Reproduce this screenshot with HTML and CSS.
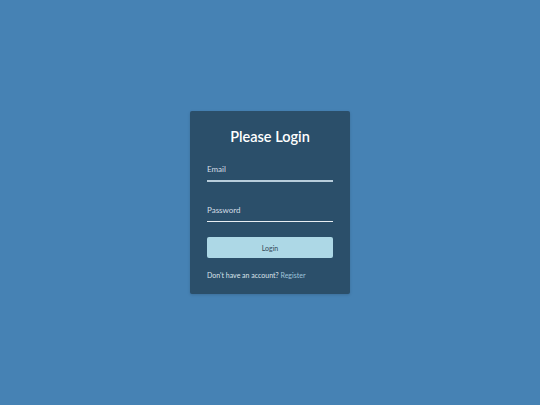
FILE: index.html
```html
<!DOCTYPE html>
<html>
<head>
<meta charset="utf-8">
<link rel="stylesheet" href="styles.css">
</head>
<body>
<div class="page">
  <form class="card">
    <h1 class="title">Please Login</h1>
    <div class="field field-first">
      <span class="label">Email</span>
      <span class="line line-email"></span>
    </div>
    <div class="field">
      <span class="label">Password</span>
      <span class="line"></span>
    </div>
    <button type="button" class="btn">Login</button>
    <p class="foot">Don't have an account? <a class="link">Register</a></p>
  </form>
</div>
</body>
</html>
```
FILE: styles.css
```css
html, body {
  margin: 0;
  padding: 0;
  height: 100%;
}
body {
  background: #4682b4;
  font-family: "Lato", "Noto Sans", sans-serif;
}
.page {
  height: 405px;
  display: flex;
  align-items: center;
  justify-content: center;
}
.card {
  width: 126px;
  padding: 17px 17px 14px;
  background: #2b4f6a;
  border-radius: 2px;
  display: flex;
  flex-direction: column;
  box-shadow: 0 1px 3px rgba(0,0,0,0.15);
}
.title {
  margin: 0 0 18px;
  color: #ffffff;
  font-size: 14.5px;
  font-weight: 600;
  text-align: center;
  line-height: 18px;
}
.field {
  display: flex;
  flex-direction: column;
  margin-bottom: 15px;
}
.field-first {
  margin-bottom: 23px;
}
.label {
  color: #d3dde5;
  font-size: 8px;
  line-height: 10px;
  padding-bottom: 6px;
}
.line {
  height: 1.5px;
  background: #e8eef2;
}
.line-email {
  background: #b8cddb;
}
.btn {
  margin: 0;
  height: 21px;
  border: none;
  border-radius: 2px;
  background: #add8e6;
  color: #34495a;
  font-family: inherit;
  font-size: 7px;
  padding: 0;
}
.foot {
  margin: 13px 0 0;
  color: #dbe4ea;
  font-size: 7px;
  line-height: 9px;
}
.link {
  color: #9fc4da;
}
```
